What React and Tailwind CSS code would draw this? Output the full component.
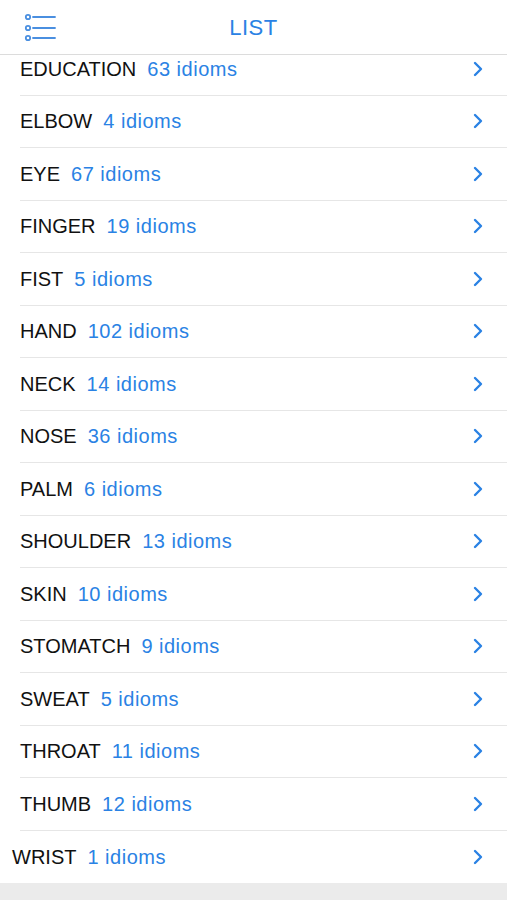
import React from 'react';

const topics = [
  { name: 'EDUCATION', count: 63 },
  { name: 'ELBOW', count: 4 },
  { name: 'EYE', count: 67 },
  { name: 'FINGER', count: 19 },
  { name: 'FIST', count: 5 },
  { name: 'HAND', count: 102 },
  { name: 'NECK', count: 14 },
  { name: 'NOSE', count: 36 },
  { name: 'PALM', count: 6 },
  { name: 'SHOULDER', count: 13 },
  { name: 'SKIN', count: 10 },
  { name: 'STOMATCH', count: 9 },
  { name: 'SWEAT', count: 5 },
  { name: 'THROAT', count: 11 },
  { name: 'THUMB', count: 12 },
  { name: 'WRIST', count: 1 },
];

const ListIcon = () => (
  <svg width="36" height="30" viewBox="0 0 36 30" fill="none" stroke="#4a8fe0" strokeWidth="1.8">
    <circle cx="5" cy="4" r="2.2" />
    <circle cx="5" cy="15" r="2.2" />
    <circle cx="5" cy="25" r="2.2" />
    <line x1="10" y1="4" x2="32" y2="4" strokeLinecap="round" />
    <line x1="10" y1="15" x2="32" y2="15" strokeLinecap="round" />
    <line x1="10" y1="25" x2="32" y2="25" strokeLinecap="round" />
  </svg>
);

const Chevron = () => (
  <svg width="10" height="16" viewBox="0 0 10 16" fill="none">
    <path d="M2 2 L8 8 L2 14" stroke="#2a82e4" strokeWidth="2.4" strokeLinecap="round" strokeLinejoin="round" />
  </svg>
);

const App = () => {
  return (
    <div className="w-[507px] h-[900px] flex flex-col bg-[#ebebeb] overflow-hidden" style={{ fontFamily: '"Liberation Sans", Arial, sans-serif' }}>
      <header className="relative h-[55px] shrink-0 bg-white border-b border-[#dcdcdc] flex items-center justify-center z-10">
        <div className="absolute left-[23px] top-[13px]">
          <ListIcon />
        </div>
        <h1 className="text-[22px] text-[#2a82e4] tracking-[0.5px]">LIST</h1>
      </header>

      <div className="overflow-hidden">
        <ul className="-mt-[12px] bg-white">
          {topics.map((t, i) => {
            const last = i === topics.length - 1;
            return (
              <li key={t.name} className="h-[52.5px] flex">
                <div
                  className={`flex-1 flex items-center justify-between pr-[24px] ${
                    last ? 'pl-[12px]' : 'ml-[20px] border-b border-[#e6e6e6]'
                  }`}
                >
                  <div className="flex items-baseline gap-[11px] text-[20px]">
                    <span className="text-[#111111]">{t.name}</span>
                    <span className="text-[#2a82e4] tracking-[0.5px]">{t.count} idioms</span>
                  </div>
                  <Chevron />
                </div>
              </li>
            );
          })}
        </ul>
      </div>
    </div>
  );
};

export default App;
